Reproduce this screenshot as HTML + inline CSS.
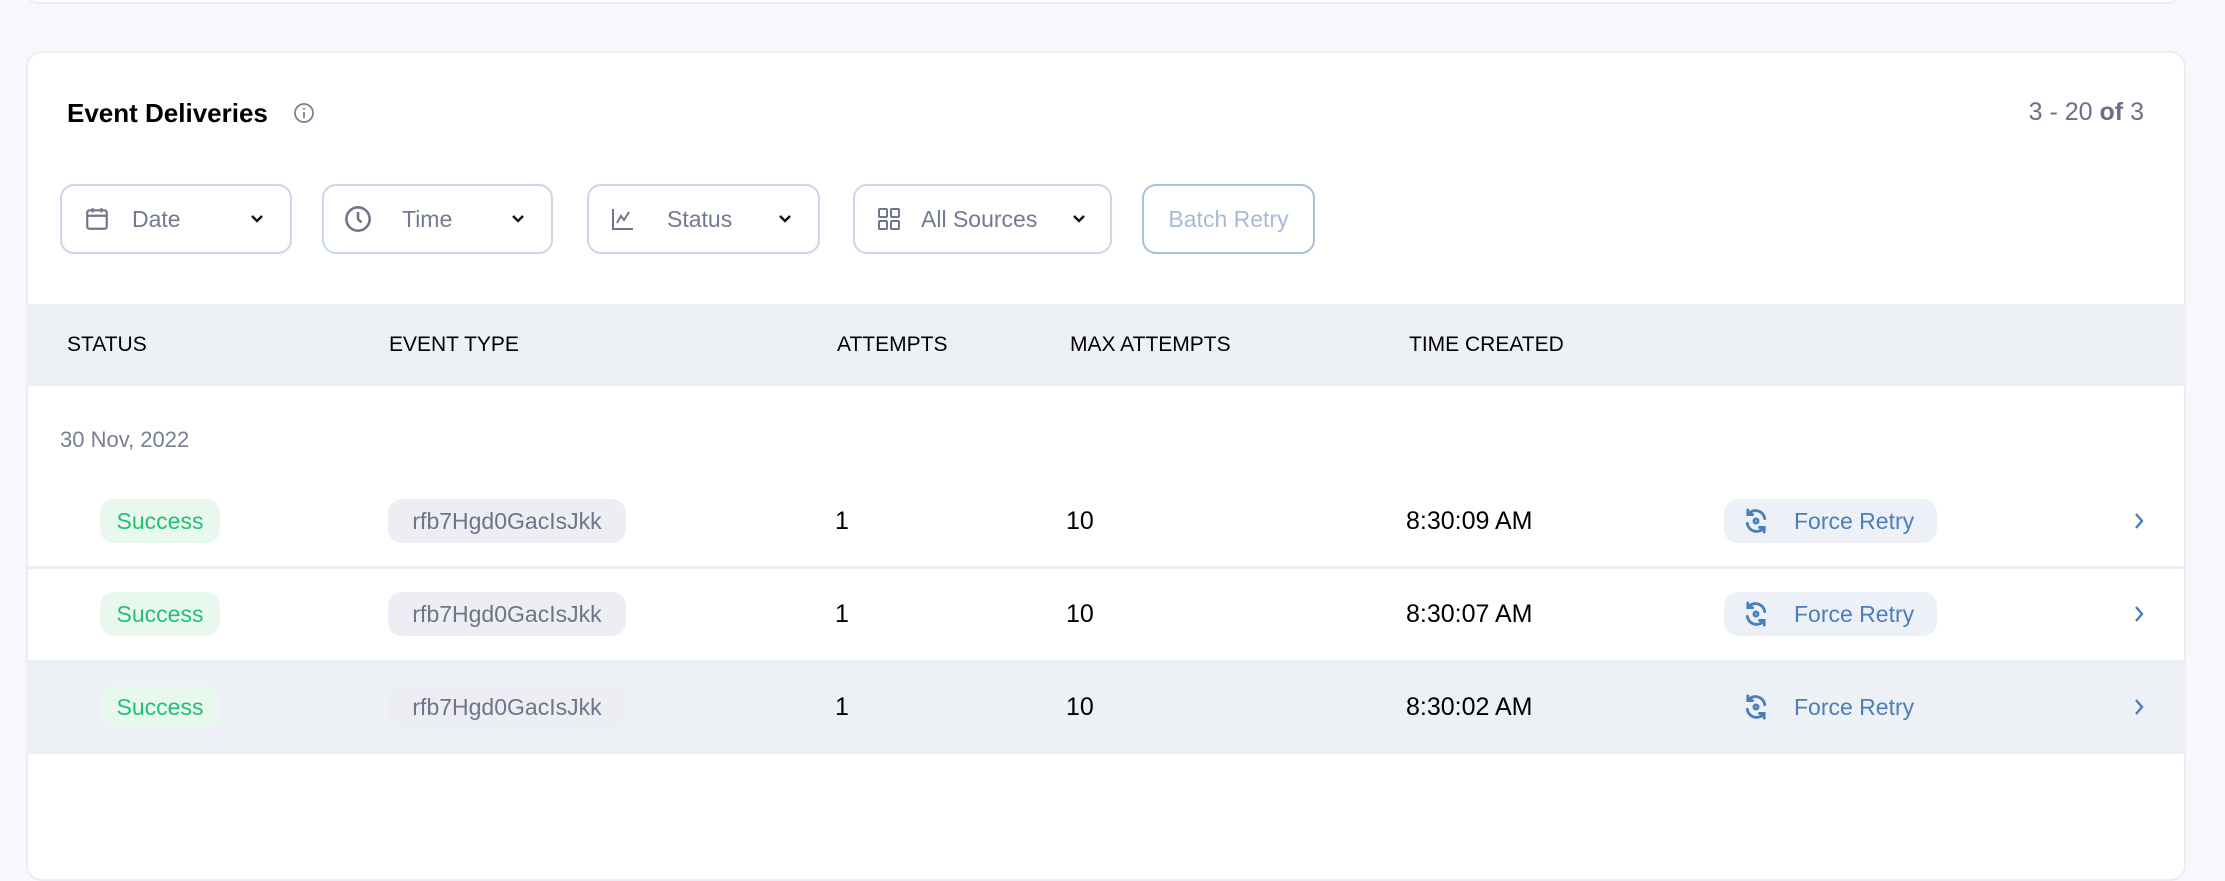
<!DOCTYPE html>
<html><head><meta charset="utf-8"><style>
*{box-sizing:border-box;margin:0;padding:0}
body{width:2225px;height:846px;background:#f8f8fc;font-family:"Liberation Sans",sans-serif;position:relative;overflow:hidden}
.a{position:absolute}
.top{left:26px;top:-20px;width:2155px;height:24px;background:#fff;border:2px solid #ebebf3;border-radius:14px}
.card{left:26px;top:51px;width:2160px;height:830px;background:#fff;border:2px solid #ececf4;border-radius:16px;overflow:hidden}
.t{color:#000;font-size:26px;font-weight:600;left:67px;top:98px}
.cnt{right:81px;top:98px;font-size:25px;color:#6b6f85}
.f{top:184px;height:70px;border:2px solid #c9d7e9;border-radius:14px;display:flex;align-items:center;font-size:23px;color:#737893}
.f svg{flex:none}
.hd{left:26px;top:304px;width:2160px;height:82px;background:#edf1f5}
.h{top:333px;font-size:21px;color:#000}
.v{font-size:25px;color:#000}
.b{height:44px;border-radius:14px;font-size:23px;display:flex;align-items:center;justify-content:center}
.s{left:100px;width:120px;background:#e9f8ef;color:#22c172}
.e{left:388px;width:238px;background:#ededf4;color:#70738a}
.r{left:1724px;width:213px;background:#edf1f7;color:#4a7fbb;justify-content:flex-start;padding-left:18px}
</style></head><body>
<div class="a top"></div>
<div class="a card"></div>
<div class="a t">Event Deliveries</div>
<svg class="a" style="left:293px;top:102px" width="22" height="22" viewBox="0 0 22 22"><circle cx="11" cy="11" r="9" fill="none" stroke="#7b7f95" stroke-width="1.8"/><line x1="11" y1="10" x2="11" y2="16" stroke="#7b7f95" stroke-width="1.8"/><circle cx="11" cy="6.8" r="1.1" fill="#7b7f95"/></svg>
<div class="a cnt">3 - 20 <b>of</b> 3</div>

<div class="a f" style="left:60px;width:232px;padding-left:22px"><svg width="26" height="26" viewBox="0 0 24 24" fill="none" stroke="#70748c" stroke-width="2"><rect x="3" y="4" width="18" height="17" rx="2"/><path d="M3 9h18M8 2v4M16 2v4"/></svg><span style="margin-left:22px">Date</span><svg style="margin-left:auto;margin-right:26px" width="14" height="10" viewBox="0 0 14 10"><path d="M2 2l5 5 5-5" fill="none" stroke="#111" stroke-width="2.4"/></svg></div>
<div class="a f" style="left:322px;width:231px;padding-left:20px"><svg width="28" height="28" viewBox="0 0 24 24" fill="none" stroke="#70748c" stroke-width="2.2"><circle cx="12" cy="12" r="10"/><path d="M12 6v6l3 3"/></svg><span style="margin-left:30px">Time</span><svg style="margin-left:auto;margin-right:26px" width="14" height="10" viewBox="0 0 14 10"><path d="M2 2l5 5 5-5" fill="none" stroke="#111" stroke-width="2.4"/></svg></div>
<div class="a f" style="left:587px;width:233px;padding-left:22px"><svg width="24" height="26" viewBox="0 0 24 24" fill="none" stroke="#70748c" stroke-width="2"><path d="M2 2v20h20M6 16l4-7 3 4 5-8"/></svg><span style="margin-left:32px">Status</span><svg style="margin-left:auto;margin-right:26px" width="14" height="10" viewBox="0 0 14 10"><path d="M2 2l5 5 5-5" fill="none" stroke="#111" stroke-width="2.4"/></svg></div>
<div class="a f" style="left:853px;width:259px;padding-left:22px"><svg width="24" height="26" viewBox="0 0 24 24" fill="none" stroke="#70748c" stroke-width="2"><rect x="2" y="2" width="8" height="8" rx="1"/><rect x="14" y="2" width="8" height="8" rx="1"/><rect x="2" y="14" width="8" height="8" rx="1"/><rect x="14" y="14" width="8" height="8" rx="1"/></svg><span style="margin-left:20px">All Sources</span><svg style="margin-left:auto;margin-right:24px" width="14" height="10" viewBox="0 0 14 10"><path d="M2 2l5 5 5-5" fill="none" stroke="#111" stroke-width="2.4"/></svg></div>
<div class="a f" style="left:1142px;width:173px;justify-content:center;border-color:#a9c0da;color:#a8bbd3">Batch Retry</div>

<div class="a hd"></div>
<div class="a h" style="left:67px">STATUS</div>
<div class="a h" style="left:389px">EVENT TYPE</div>
<div class="a h" style="left:837px">ATTEMPTS</div>
<div class="a h" style="left:1070px">MAX ATTEMPTS</div>
<div class="a h" style="left:1409px">TIME CREATED</div>

<div class="a" style="left:60px;top:427px;font-size:22px;color:#7a7e92">30 Nov, 2022</div>
<div class="a" style="left:26px;top:566px;width:2160px;height:3px;background:#ececf3"></div>
<div class="a" style="left:26px;top:660px;width:2160px;height:94px;background:#edf1f5"></div>

<div class="a b s" style="top:499px">Success</div>
<div class="a b e" style="top:499px">rfb7Hgd0GacIsJkk</div>
<div class="a v" style="left:835px;top:507px">1</div>
<div class="a v" style="left:1066px;top:507px">10</div>
<div class="a v" style="left:1406px;top:507px">8:30:09 AM</div>
<div class="a b r" style="top:499px"><svg width="28" height="28" viewBox="0 0 24 24" fill="none" stroke="#4a7fbb" stroke-width="2.4" stroke-linecap="round"><path d="M19.5 10A8 8 0 0 0 5 6.5"/><path d="M4.5 14A8 8 0 0 0 19 17.5"/><path d="M5 2.5v4h4M19 21.5v-4h-4"/><circle cx="12" cy="12" r="1.8"/></svg><span style="margin-left:24px">Force Retry</span></div>
<svg class="a" style="left:2133px;top:511px" width="12" height="20" viewBox="0 0 12 20"><path d="M3 3l6 7-6 7" fill="none" stroke="#4a7fbb" stroke-width="2.4"/></svg>

<div class="a b s" style="top:592px">Success</div>
<div class="a b e" style="top:592px">rfb7Hgd0GacIsJkk</div>
<div class="a v" style="left:835px;top:600px">1</div>
<div class="a v" style="left:1066px;top:600px">10</div>
<div class="a v" style="left:1406px;top:600px">8:30:07 AM</div>
<div class="a b r" style="top:592px"><svg width="28" height="28" viewBox="0 0 24 24" fill="none" stroke="#4a7fbb" stroke-width="2.4" stroke-linecap="round"><path d="M19.5 10A8 8 0 0 0 5 6.5"/><path d="M4.5 14A8 8 0 0 0 19 17.5"/><path d="M5 2.5v4h4M19 21.5v-4h-4"/><circle cx="12" cy="12" r="1.8"/></svg><span style="margin-left:24px">Force Retry</span></div>
<svg class="a" style="left:2133px;top:604px" width="12" height="20" viewBox="0 0 12 20"><path d="M3 3l6 7-6 7" fill="none" stroke="#4a7fbb" stroke-width="2.4"/></svg>

<div class="a b s" style="top:685px">Success</div>
<div class="a b e" style="top:685px">rfb7Hgd0GacIsJkk</div>
<div class="a v" style="left:835px;top:693px">1</div>
<div class="a v" style="left:1066px;top:693px">10</div>
<div class="a v" style="left:1406px;top:693px">8:30:02 AM</div>
<div class="a b r" style="top:685px;background:transparent"><svg width="28" height="28" viewBox="0 0 24 24" fill="none" stroke="#4a7fbb" stroke-width="2.4" stroke-linecap="round"><path d="M19.5 10A8 8 0 0 0 5 6.5"/><path d="M4.5 14A8 8 0 0 0 19 17.5"/><path d="M5 2.5v4h4M19 21.5v-4h-4"/><circle cx="12" cy="12" r="1.8"/></svg><span style="margin-left:24px">Force Retry</span></div>
<svg class="a" style="left:2133px;top:697px" width="12" height="20" viewBox="0 0 12 20"><path d="M3 3l6 7-6 7" fill="none" stroke="#4a7fbb" stroke-width="2.4"/></svg>
</body></html>
